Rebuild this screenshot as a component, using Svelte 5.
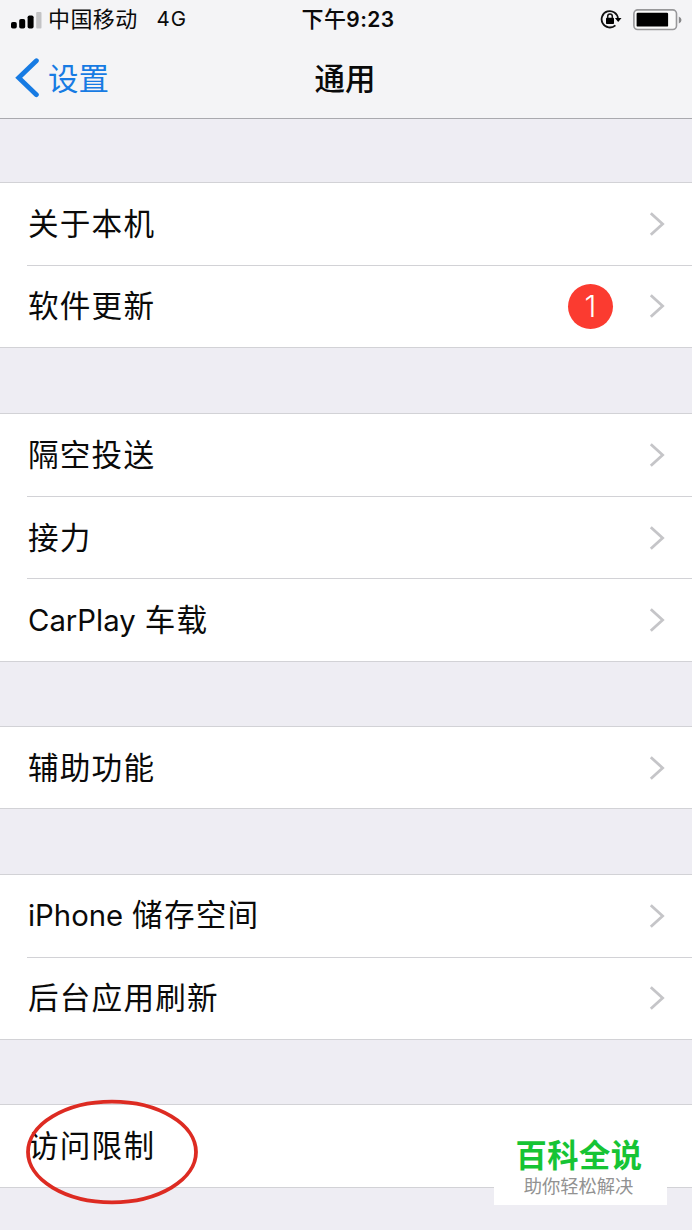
<script>
    const groups = [
        { height: 166, gap: 63, rows: [{ label: '关于本机' }, { label: '软件更新', badge: 1 }] },
        { height: 249, gap: 65, rows: [{ label: '隔空投送' }, { label: '接力' }, { latin: 'CarPlay', label: '车载' }] },
        { height: 83, gap: 64, rows: [{ label: '辅助功能' }] },
        { height: 166, gap: 65, rows: [{ latin: 'iPhone', label: '储存空间' }, { label: '后台应用刷新' }] },
        { height: 84, gap: 64, rows: [{ label: '访问限制', marked: true }] }
    ]
</script>

<div class="screen">
    <header>
        <div class="status">
            <div class="carrier">
                <svg width="31" height="20" viewBox="0 0 31 20">
                    <rect x="0" y="12" width="5.8" height="6.5" rx="1.8" />
                    <rect x="8.2" y="9" width="6" height="9.5" rx="1.8" />
                    <rect x="16.6" y="5.5" width="6" height="13" rx="1.8" />
                    <rect x="25.2" y="2" width="5.3" height="16.5" rx="1" fill="#c3c3c5" />
                </svg>
                <span class="operator">中国移动</span>
                <span class="network">4G</span>
            </div>
            <div class="time">下午<b>9:23</b></div>
            <div class="indicators">
                <svg width="22" height="20" viewBox="0 0 22 20">
                    <path d="M18 8.6A8.2 8.2 0 1 0 15.4 15.3" fill="none" stroke="#111" stroke-width="1.8" />
                    <path d="M14.9 8h6.6l-3.3 4z" />
                    <rect x="6" y="7.7" width="8" height="6.3" rx="0.8" />
                    <path d="M7.7 8.1V6.3a2.3 2.3 0 0 1 4.6 0v1.8" fill="none" stroke="#111" stroke-width="1.5" />
                </svg>
                <svg width="49" height="22" viewBox="0 0 49 22">
                    <rect x="0.9" y="0.9" width="42.6" height="19.6" rx="3.8" fill="#fafafa" stroke="#98989a" stroke-width="1.6" />
                    <rect x="3.6" y="3.8" width="31.5" height="13.8" rx="1.2" />
                    <path d="M45.8 7.5q2.7 1 2.7 3.5t-2.7 3.5z" fill="#88888a" />
                </svg>
            </div>
        </div>
        <nav>
            <div class="back">
                <svg width="24" height="40" viewBox="0 0 24 40">
                    <path d="M21.4 2.7L3.7 19.7l17.7 17" fill="none" stroke="#177be3" stroke-width="4.8" stroke-linecap="round" />
                </svg>
                <span>设置</span>
            </div>
            <h1>通用</h1>
        </nav>
    </header>

    {#each groups as group}
        <section style="height: {group.height}px; margin-top: {group.gap}px">
            {#each group.rows as row}
                <div class="row">
                    <span class="label">
                        {#if row.latin}<span class="latin">{row.latin}</span>{/if}{row.label}
                        {#if row.marked}
                            <svg class="mark" width="174" height="108" viewBox="0 0 174 108">
                                <ellipse cx="87" cy="54" rx="84" ry="50.3" fill="none" stroke="#dd2b22" stroke-width="3.8" />
                            </svg>
                        {/if}
                    </span>
                    {#if row.badge}
                        <span class="badge">{row.badge}</span>
                    {/if}
                    <svg width="16" height="26" viewBox="0 0 16 26">
                        <path d="M1.8 2.2L13.6 13L1.8 23.8" fill="none" stroke="#c5c5c8" stroke-width="2.8" />
                    </svg>
                </div>
            {/each}
        </section>
    {/each}

    <aside>
        <strong>百科全说</strong>
        <span>助你轻松解决</span>
    </aside>
</div>

<style>
    :global(body) {
        background: #eeedf3;
    }

    .screen {
        position: relative;
        height: 1230px;
        overflow: hidden;
        box-sizing: border-box;
        color: #0a0a0a;
        background: #eeedf3;
        font-family: Inter, "Noto Sans CJK SC", sans-serif;
    }

    header {
        height: 119px;
        box-sizing: border-box;
        background: #f4f4f6;
        border-bottom: 1px solid #a9a9ae;
    }

    .status {
        display: grid;
        grid-template-columns: 1fr auto 1fr;
        align-items: center;
        height: 38px;
        padding: 0 10px 0 11px;
        font-size: 22px;
        line-height: 36px;
    }

    .carrier,
    .indicators {
        display: flex;
        align-items: center;
    }

    .carrier svg {
        margin-top: 2px;
    }

    .operator {
        margin-left: 6px;
        letter-spacing: 0.4px;
    }

    .network {
        margin-left: 19px;
        font-size: 20.5px;
        letter-spacing: 1px;
    }

    .time {
        padding-left: 3px;
        font-weight: 500;
        letter-spacing: 0.4px;
    }

    .time b {
        font-weight: 600;
        font-size: 21px;
    }

    .indicators {
        justify-content: flex-end;
        gap: 11px;
        padding-top: 1px;
    }

    nav {
        display: grid;
        grid-template-columns: 1fr auto 1fr;
        align-items: center;
        height: 79px;
        padding: 0 15px;
    }

    .back {
        display: flex;
        align-items: center;
        gap: 9px;
        color: #177be3;
        font-size: 30.5px;
    }

    .back span {
        padding-bottom: 2px;
    }

    h1 {
        margin: 0;
        padding: 0 2px 2px 0;
        font-size: 30.5px;
        font-weight: 500;
    }

    section {
        display: flex;
        flex-direction: column;
        box-sizing: border-box;
        background: #fff;
        border-top: 1px solid #d2d2d6;
        border-bottom: 1px solid #d2d2d6;
    }

    .row {
        flex: 1;
        display: flex;
        align-items: center;
        margin-left: 27px;
        padding-right: 27px;
    }

    .row + .row {
        border-top: 1px solid #d2d2d6;
    }

    .label {
        position: relative;
        flex: 1;
        padding-left: 1px;
        font-size: 30.6px;
        line-height: 44px;
        letter-spacing: 1.2px;
    }

    .latin {
        margin-right: 9px;
        font-size: 29.3px;
        letter-spacing: 0;
    }

    .mark {
        position: absolute;
        left: -2px;
        top: -26px;
    }

    .badge {
        width: 45px;
        height: 45px;
        margin-right: 36px;
        border-radius: 50%;
        background: #fb3b30;
        color: #fff;
        font-size: 30px;
        font-weight: 300;
        line-height: 45px;
        text-align: center;
    }

    aside {
        position: absolute;
        left: 494px;
        top: 1130px;
        display: flex;
        flex-direction: column;
        align-items: center;
        width: 173px;
        height: 75px;
        background: #fff;
    }

    aside strong {
        margin-left: -3px;
        color: #16c434;
        font-size: 31.3px;
        font-weight: 700;
        line-height: 52px;
        letter-spacing: 0.5px;
    }

    aside span {
        margin-left: -4px;
        color: #929292;
        font-size: 18.3px;
        line-height: 8px;
    }
</style>
